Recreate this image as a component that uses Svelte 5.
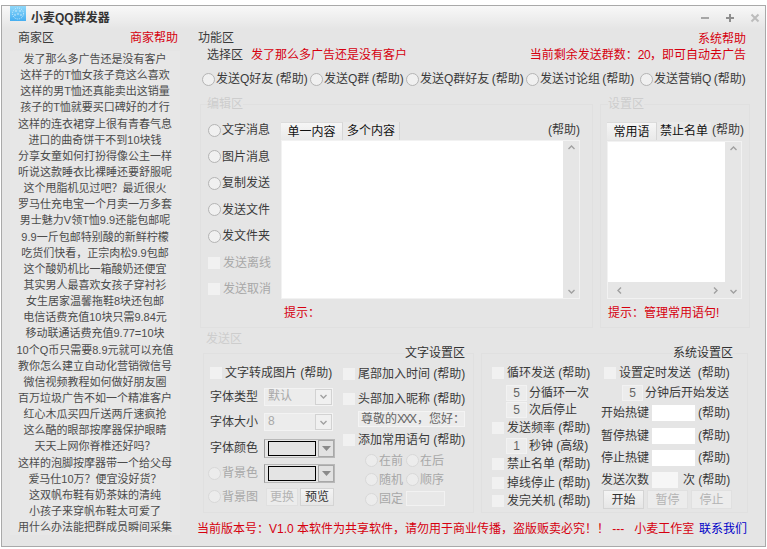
<script>
  const ads = ['发了那么多广告还是没有客户','这样子的T恤女孩子竟这么喜欢','这样的男T恤还真能卖出这销量','孩子的T恤就要买口碑好的才行','这样的连衣裙穿上很有青春气息','进口的曲奇饼干不到10块钱','分享女童如何打扮得像公主一样','听说这款睡衣比裸睡还要舒服呢','这个甩脂机见过吧？最近很火','罗马仕充电宝一个月卖一万多套','男士魅力V领T恤9.9还能包邮呢','9.9一斤包邮特别酸的新鲜柠檬','吃货们快看，正宗肉松9.9包邮','这个酸奶机比一箱酸奶还便宜','其实男人最喜欢女孩子穿衬衫','女生居家温馨拖鞋8块还包邮','电信话费充值10块只需9.84元','移动联通话费充值9.77=10块','10个Q币只需要8.9元就可以充值','教你怎么建立自动化营销微信号','微信视频教程如何做好朋友圈','百万垃圾广告不如一个精准客户','红心木瓜买四斤送两斤速疯抢','这么酷的眼部按摩器保护眼睛','天天上网你脊椎还好吗？','这样的泡脚按摩器带一个给父母','爱马仕10万？便宜没好货？','这双帆布鞋有奶茶妹的清纯','小孩子来穿帆布鞋太可爱了','用什么办法能把群成员瞬间采集'];
  const targets = ['发送Q好友 (帮助)','发送Q群 (帮助)','发送Q群好友 (帮助)','发送讨论组 (帮助)','发送营销Q (帮助)'];
  const kinds = ['文字消息','图片消息','复制发送','发送文件','发文件夹'];
  const hotkeys = ['开始热键','暂停热键','停止热键'];
</script>

{#snippet chevron(dir)}
  <svg class="chev" width="7" height="5" viewBox="0 0 7 5" style="transform: rotate({dir}deg)"><path d="M0.5 4L3.5 1L6.5 4" fill="none" stroke="#a0a0a0" stroke-width="1.4"/></svg>
{/snippet}

{#snippet vbar()}
  <div class="vbar">
    {@render chevron(0)}
    {@render chevron(180)}
  </div>
{/snippet}

{#snippet colorSelect()}
  <span class="colorsel"><i class="swatch"></i><b class="carrow"><svg width="9" height="5" viewBox="0 0 9 5"><path d="M0 0H9L4.5 5Z" fill="#8a8a8a"/></svg></b></span>
{/snippet}

{#snippet select(v)}
  <span class="select"><em>{v}</em><b class="sarrow">{@render chevron(180)}</b></span>
{/snippet}

<div class="window">
  <header class="titlebar">
    <svg class="logo" width="16" height="15" viewBox="0 0 16 15">
      <defs><linearGradient id="lg" x1="0" y1="0" x2="0" y2="1"><stop offset="0" stop-color="#8fd8fa"/><stop offset="1" stop-color="#45aef0"/></linearGradient></defs>
      <rect width="16" height="15" fill="url(#lg)"/>
      <circle cx="8" cy="7.5" r="5.5" fill="none" stroke="#d8f2ff" stroke-width="1" stroke-dasharray="1 1.2"/>
      <g fill="#e6f7ff"><circle cx="6" cy="5" r=".7"/><circle cx="10" cy="5" r=".7"/><circle cx="8" cy="8" r=".7"/><circle cx="5" cy="9" r=".7"/><circle cx="11" cy="9" r=".7"/></g>
    </svg>
    <h1>小麦QQ群发器</h1>
    <div class="controls">
      <svg width="10" height="10" viewBox="0 0 10 10"><path d="M1 5H9" stroke="#a6a6a6" stroke-width="2"/></svg>
      <svg width="10" height="10" viewBox="0 0 10 10"><path d="M1 5H9M5 1V9" stroke="#8e8e8e" stroke-width="2"/></svg>
      <svg width="10" height="10" viewBox="0 0 10 10"><path d="M1.5 1.5L8.5 8.5M8.5 1.5L1.5 8.5" stroke="#bcbcbc" stroke-width="2"/></svg>
    </div>
  </header>

  <div class="main">
    <aside class="shops">
      <div class="shops-head"><span>商家区</span><span class="red">商家帮助</span></div>
      <ul class="adlist">
        {#each ads as a}<li>{a}</li>{/each}
      </ul>
    </aside>

    <section class="func">
      <div class="head"><span>功能区</span><span class="red sys">系统帮助</span></div>
      <div class="selrow">
        <span>选择区</span><span class="red pitch">发了那么多广告还是没有客户</span>
        <span class="red right">当前剩余发送群数：<span class="tight">20</span>，即可自动去广告</span>
      </div>
      <div class="targets">
        {#each targets as t}<label class="opt"><i class="radio"></i>{t}</label>{/each}
      </div>

      <div class="editors">
        <fieldset class="edit">
          <legend class="dim">编辑区</legend>
          <div class="edit-body">
            <div class="kinds">
              {#each kinds as k}<label class="opt"><i class="radio"></i>{k}</label>{/each}
              <label class="opt off"><i class="check"></i>发送离线</label>
              <label class="opt off"><i class="check"></i>发送取消</label>
            </div>
            <div class="editor">
              <div class="tabs">
                <span class="tab on wide">单一内容</span><span class="tab wide2">多个内容</span>
                <span class="help">(帮助)</span>
              </div>
              <div class="textbox">
                <div class="area"></div>
                {@render vbar()}
              </div>
              <div class="red tip">提示：</div>
            </div>
          </div>
        </fieldset>

        <fieldset class="settings">
          <legend class="dim">设置区</legend>
          <div class="set-body">
            <div class="tabs">
              <span class="tab on s1">常用语</span><span class="tab s2">禁止名单</span>
              <span class="help">(帮助)</span>
            </div>
            <div class="textbox small">
              <div class="area-col">
                <div class="area"></div>
                <div class="hbar">
                  <span class="turn-l">{@render chevron(0)}</span>
                  <span class="turn-r">{@render chevron(0)}</span>
                </div>
              </div>
              {@render vbar()}
            </div>
            <div class="red tip2">提示：管理常用语句!</div>
          </div>
        </fieldset>
      </div>

      <div class="dim send-label">发送区</div>
      <div class="send">
        <fieldset class="textset">
          <legend>文字设置区</legend>
          <div class="cols">
            <div class="col-a">
              <label class="opt pad"><i class="check"></i>文字转成图片 (帮助)</label>
              <div class="frow"><span class="flabel">字体类型</span>{@render select('默认')}</div>
              <div class="frow"><span class="flabel">字体大小</span>{@render select('8')}</div>
              <div class="frow"><span class="flabel">字体颜色</span>{@render colorSelect()}</div>
              <div class="frow back off"><label class="opt"><i class="radio"></i>背景色</label>{@render colorSelect()}</div>
              <div class="frow back off">
                <label class="opt"><i class="radio"></i>背景图</label>
                <button class="btn swap" disabled>更换</button><button class="btn preview">预览</button>
              </div>
            </div>
            <div class="col-b">
              <label class="opt"><i class="check"></i>尾部加入时间 (帮助)</label>
              <label class="opt"><i class="check"></i>头部加入昵称 (帮助)</label>
              <div class="greet">尊敬的<span class="xxx">XXX</span>，您好：</div>
              <label class="opt"><i class="check"></i>添加常用语句 (帮助)</label>
              <div class="pair off"><label class="opt"><i class="radio"></i>在前</label><label class="opt"><i class="radio"></i>在后</label></div>
              <div class="pair off"><label class="opt"><i class="radio"></i>随机</label><label class="opt"><i class="radio"></i>顺序</label></div>
              <div class="pair off"><label class="opt"><i class="radio"></i>固定</label><span class="fixed"></span></div>
            </div>
          </div>
        </fieldset>

        <fieldset class="sysset">
          <legend>系统设置区</legend>
          <div class="cols">
            <div class="col-c">
              <label class="opt"><i class="check"></i>循环发送 (帮助)</label>
              <div class="sub"><span class="num">5</span>分循环一次</div>
              <div class="sub"><span class="num">5</span>次后停止</div>
              <label class="opt"><i class="check"></i>发送频率 (帮助)</label>
              <div class="sub"><span class="num">1</span>秒钟 (高级)</div>
              <label class="opt"><i class="check"></i>禁止名单 (帮助)</label>
              <label class="opt"><i class="check"></i>掉线停止 (帮助)</label>
              <label class="opt"><i class="check"></i>发完关机 (帮助)</label>
            </div>
            <div class="col-d">
              <label class="opt ind"><i class="check"></i>设置定时发送&nbsp;&nbsp;(帮助)</label>
              <div class="sub ind2"><span class="num">5</span>分钟后开始发送</div>
              {#each hotkeys as h}
                <div class="hot"><span>{h}</span><i class="field"></i><span>(帮助)</span></div>
              {/each}
              <div class="hot"><span>发送次数</span><i class="field short"></i><span>次 (帮助)</span></div>
              <div class="actions">
                <button class="btn act">开始</button><button class="btn act" disabled>暂停</button><button class="btn act" disabled>停止</button>
              </div>
            </div>
          </div>
        </fieldset>
      </div>

      <footer class="foot">
        <span class="red">当前版本号：V1.0 本软件为共享软件，请勿用于商业传播，盗版贩卖必究！！&nbsp;---&nbsp;&nbsp;&nbsp;小麦工作室</span>
        <span class="link">联系我们</span>
      </footer>
    </section>
  </div>
</div>

<style>
  :global(body) { margin: 0; background: #fff; }
  * { box-sizing: border-box; }
  .window {
    width: 765px; height: 542px; margin: 5px 0 0 1px;
    border: 1px solid #a9a9a9; background: #e5e5e5;
    font: 12px/16px "Liberation Sans", "Noto Sans CJK SC", sans-serif; color: #3a3a3a;
    display: flex; flex-direction: column; overflow: hidden;
  }
  .titlebar {
    height: 23px; flex: none; display: flex; align-items: center; padding-left: 8px;
    background: linear-gradient(#f8f8f8, #e5e5e5);
    position: relative;
  }
  .logo { position: relative; top: -4px; }
  h1 { margin: 0 0 0 5px; font-size: 12px; font-weight: 700; color: #333; line-height: 16px; }
  .controls { margin-left: auto; display: flex; gap: 15px; padding-right: 5px; }
  .main { flex: 1; display: flex; min-height: 0; }
  .red { color: #d6000f; }
  .tight { letter-spacing: -0.6px; }
  .shops { width: 188px; flex: none; }
  .shops-head { display: flex; justify-content: space-between; margin-top: 1px; padding: 0 12px 0 16px; }
  .adlist { list-style: none; margin: 5px 0 0 8px; padding: 0; width: 170px; text-align: center; font-size: 11px; line-height: 16.14px; color: #4c4c4c; background: #e7e7e7; }
  .func { flex: 1; padding: 0 15px 0 8px; min-width: 0; }
  .head { display: flex; justify-content: space-between; height: 16px; margin-top: 1px; padding-right: 4px; }
  .sys { position: relative; top: 1px; }
  .selrow { display: flex; height: 16px; margin-top: 1px; padding: 0 4px 0 9px; }
  .pitch { margin-left: 8px; }
  .right { margin-left: auto; }
  .targets { display: grid; grid-template-columns: 108px 96px 120px 114px auto; height: 16px; margin: 8px 0 0 4px; word-spacing: -1px; }
  .opt { display: flex; align-items: center; white-space: nowrap; height: 100%; }
  .radio { width: 13px; height: 13px; border-radius: 50%; border: 1px solid #b4b4b4; background: #f0f0f0; margin-right: 1px; flex: none; }
  .check { width: 12px; height: 12px; background: #f1f1f1; margin-right: 3px; flex: none; }
  .off, .off .opt { color: #a8a8a8; }
  .off .radio { background: #ececec; border-color: #d8d8d8; }
  .dim { color: #cdcdcd; }
  .editors { display: flex; gap: 7px; margin: 9px 0 0 2px; }
  fieldset { margin: 0; padding: 0; min-width: 0; border: 1px solid #e0e0e0; }
  legend { padding: 0; line-height: 16px; }
  .edit { width: 393px; height: 232px; }
  .edit legend { margin-left: 6px; }
  .edit-body { display: flex; }
  .kinds { width: 80px; flex: none; padding: 5px 0 0 7px; display: grid; grid-auto-rows: 26.5px; }
  .editor { width: 299px; padding-top: 10px; }
  .tabs { display: flex; height: 18px; color: #111; }
  .tab { display: flex; align-items: center; justify-content: center; background: #e9e9e9; border-right: 1px solid #d6d6d6; }
  .tab.on { background: linear-gradient(#f6f6f6, #e9e9e9); border-top: 1px solid #dcdcdc; }
  .wide { width: 62px; }
  .wide2 { width: 57px; }
  .help { margin-left: auto; color: #3a3a3a; }
  .textbox { display: flex; height: 159px; border: 1px solid #f2f2f2; }
  .area { flex: 1; background: #fff; }
  .vbar { width: 16px; flex: none; background: #e6e6e6; display: flex; flex-direction: column; justify-content: space-between; align-items: center; padding: 4px 0; }
  .chev { display: block; }
  .tip { margin: 6px 0 0 3px; }
  .settings { width: 150px; height: 232px; }
  .settings legend { margin-left: 7px; }
  .set-body { padding: 10px 5px 0 6px; }
  .s1 { width: 50px; }
  .s2 { width: 54px; border-right: 0; }
  .small { width: 135px; margin-top: 1px; height: 158px; }
  .area-col { flex: 1; display: flex; flex-direction: column; min-width: 0; }
  .hbar { height: 16px; background: #e6e6e6; display: flex; justify-content: space-between; align-items: center; padding: 0 6px 0 8px; }
  .turn-l { transform: rotate(-90deg); }
  .turn-r { transform: rotate(90deg); }
  .tip2 { margin: 6px 0 0 1px; }
  .send-label { height: 16px; line-height: 16px; margin: 3px 0 0 8px; }
  .send { display: flex; gap: 7px; margin: -2px 0 0 5px; }
  .send legend { margin-left: auto; margin-right: 8px; color: #333; }
  .textset { width: 271px; height: 168px; }
  .sysset { width: 267px; height: 168px; }
  .sysset legend { margin-right: 14px; }
  .cols { display: flex; }
  .col-a { width: 139px; flex: none; display: grid; grid-template-rows: 23px 25px 26px 26px 24px 23px; }
  .pad { padding-left: 6px; }
  .frow { display: flex; align-items: center; padding-left: 6px; }
  .flabel { width: 54px; flex: none; }
  .back { padding-left: 4px; }
  .back .opt { width: 56px; flex: none; }
  .select { width: 69px; height: 18px; display: flex; background: #ececec; border: 1px solid #f3f3f3; color: #a8a8a8; }
  .select em { flex: 1; font-style: normal; padding-left: 3px; line-height: 15px; }
  .sarrow { width: 17px; background: #f0f0f0; border: 1px solid #d2d2d2; display: flex; align-items: center; justify-content: center; }
  .colorsel { width: 71px; height: 19px; display: flex; align-items: center; padding: 0 0 0 3px; border: 1px solid #b8b8b8; border-left-color: #9a9a9a; background: #e6e6e6; }
  .swatch { width: 48px; height: 15px; border: 1px solid #000; background: #e4e4e4; }
  .carrow { flex: 1; height: 100%; margin-left: 2px; background: #e2e2e2; border: 1px solid #a8a8a8; display: flex; align-items: center; justify-content: center; }
  .btn { font: inherit; line-height: 14px; padding: 0; height: 18px; border: 1px solid #d4d4d4; background: linear-gradient(#f4f4f4, #e6e6e6); color: #333; }
  .btn:disabled { color: #b4b4b4; background: #ececec; border-color: #e0e0e0; }
  .swap { width: 32px; margin-left: 2px; margin-right: 2px; }
  .preview { width: 34px; }
  .col-b { flex: 1; display: grid; grid-template-rows: 24px 26px 16px 24px 19px 19px 20px; }
  .col-b > .opt { padding-top: 2px; }
  .greet { margin-left: 15px; width: 107px; background: #ececec; border: 1px solid #f4f4f4; color: #666; line-height: 14px; padding-left: 2px; white-space: nowrap; overflow: hidden; }
  .xxx { letter-spacing: -2px; margin-right: 2px; }
  .pair { display: flex; padding-left: 22px; }
  .pair .opt { width: 41px; flex: none; }
  .fixed { width: 39px; height: 15px; margin-top: 2px; background: #e8e8e8; border: 1px solid #f2f2f2; }
  .col-c { width: 119px; flex: none; display: grid; grid-template-rows: 24px 16px 18px 17px 19px 18px 19px 18px; padding-left: 10px; }
  .sub { display: flex; align-items: center; padding-left: 14px; white-space: nowrap; }
  .num { width: 21px; height: 16px; margin-right: 2px; background: #ececec; border: 1px solid #f2f2f2; text-align: center; line-height: 14px; color: #666; }
  .col-d { flex: 1; display: grid; grid-template-rows: 24px 16px 24px 22px 22px 21px 19px; }
  .ind { padding-left: 3px; }
  .ind2 { padding-left: 21px; }
  .hot { display: flex; align-items: center; }
  .field { width: 43px; height: 16px; margin: 0 3px 0 3px; background: #fff; flex: none; }
  .field.short { width: 26px; margin-right: 5px; background: #f6f6f6; }
  .actions { display: flex; gap: 3px; padding-left: 2px; }
  .act { width: 41px; height: 19px; }
  .foot { display: flex; justify-content: space-between; height: 16px; margin: 8px 0 0 -1px; padding-right: 3px; white-space: nowrap; }
  .link { color: #0000c8; }
</style>
